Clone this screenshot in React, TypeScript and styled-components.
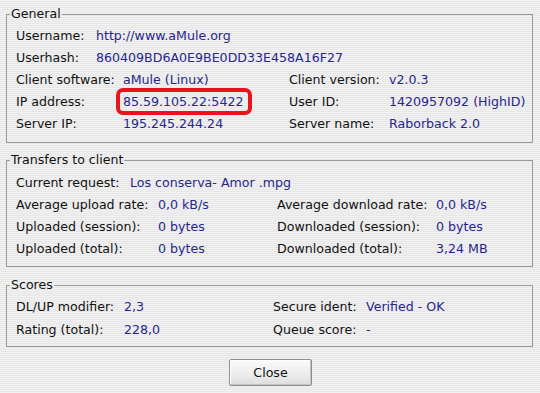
import styled, { createGlobalStyle } from "styled-components";

const GlobalStyle = createGlobalStyle`
  html, body {
    margin: 0;
    padding: 0;
  }
  body {
    width: 540px;
    height: 393px;
    overflow: hidden;
    font-family: "DejaVu Sans", "Liberation Sans", sans-serif;
    font-size: 12.6px;
    color: #111;
    background: repeating-linear-gradient(
      to bottom,
      #f1f1f1 0px,
      #f1f1f1 1px,
      #e7e7e7 1px,
      #e7e7e7 2px
    );
  }
`;

type Row = { label: string; value: string; highlight?: boolean };

const general: Row[][] = [
  [{ label: "Username:", value: "http://www.aMule.org" }],
  [{ label: "Userhash:", value: "860409BD6A0E9BE0DD33E458A16F27" }],
  [
    { label: "Client software:", value: "aMule (Linux)" },
    { label: "Client version:", value: "v2.0.3" },
  ],
  [
    { label: "IP address:", value: "85.59.105.22:5422", highlight: true },
    { label: "User ID:", value: "1420957092 (HighID)" },
  ],
  [
    { label: "Server IP:", value: "195.245.244.24" },
    { label: "Server name:", value: "Raborback 2.0" },
  ],
];

const transfers: Row[][] = [
  [
    { label: "Average upload rate:", value: "0,0 kB/s" },
    { label: "Average download rate:", value: "0,0 kB/s" },
  ],
  [
    { label: "Uploaded (session):", value: "0 bytes" },
    { label: "Downloaded (session):", value: "0 bytes" },
  ],
  [
    { label: "Uploaded (total):", value: "0 bytes" },
    { label: "Downloaded (total):", value: "3,24 MB" },
  ],
];

const scores: Row[][] = [
  [
    { label: "DL/UP modifier:", value: "2,3" },
    { label: "Secure ident:", value: "Verified - OK" },
  ],
  [
    { label: "Rating (total):", value: "228,0" },
    { label: "Queue score:", value: "-" },
  ],
];

const renderRows = (rows: Row[][]) =>
  rows.map((row) =>
    row.map((cell) => [
      <Label key={cell.label}>{cell.label}</Label>,
      <Cell key={cell.label + "v"}>
        <Value $highlight={cell.highlight}>{cell.value}</Value>
      </Cell>,
    ])
  );

const App = () => {
  return (
    <>
      <GlobalStyle />
      <Dialog>
        <Frame $top={6} $pt={2} $pb={8}>
          <Title>General</Title>
          <Grid $cols="80px 1fr" $row={22}>
            {renderRows(general.slice(0, 2))}
          </Grid>
          <Grid $cols="107px 166px 100px 1fr" $row={22}>
            {renderRows(general.slice(2))}
          </Grid>
        </Frame>

        <Frame $top={9} $pt={3} $pb={7}>
          <Title>Transfers to client</Title>
          <Grid $cols="114px 1fr" $row={22}>
            <Label>Current request:</Label>
            <Cell>
              <Value>Los conserva- Amor .mpg</Value>
            </Cell>
          </Grid>
          <Grid $cols="142px 119px 159px 1fr" $row={22}>
            {renderRows(transfers)}
          </Grid>
        </Frame>

        <Frame $top={10} $pt={2} $pb={5}>
          <Title>Scores</Title>
          <Grid $cols="108px 149px 93px 1fr" $row={23}>
            {renderRows(scores)}
          </Grid>
        </Frame>

        <Footer>
          <Button>Close</Button>
        </Footer>
      </Dialog>
    </>
  );
};

export default App;

const Dialog = styled.div`
  display: flex;
  flex-direction: column;
  padding: 0 7px 0 6px;
`;

const Frame = styled.fieldset<{ $top: number; $pt: number; $pb: number }>`
  margin: ${({ $top }) => $top}px 0 0 0;
  padding: ${({ $pt }) => $pt}px 8px ${({ $pb }) => $pb}px 9px;
  border: 1px solid #9a9a9a;
  min-width: 0;
`;

const Title = styled.legend`
  margin-left: -6px;
  padding: 0 1px;
  line-height: 16px;
  font-size: 12.6px;
  color: #111;
`;

const Grid = styled.div<{ $cols: string; $row: number }>`
  display: grid;
  grid-template-columns: ${({ $cols }) => $cols};
  grid-auto-rows: ${({ $row }) => $row}px;
  align-items: center;
`;

const Label = styled.div`
  white-space: nowrap;
  color: #111;
`;

const Cell = styled.div`
  white-space: nowrap;
`;

const Value = styled.span<{ $highlight?: boolean }>`
  position: relative;
  color: #26268e;

  &::after {
    content: "";
    display: ${({ $highlight }) => ($highlight ? "block" : "none")};
    position: absolute;
    left: -7px;
    right: -9px;
    top: -6px;
    bottom: -6px;
    border: 4px solid #e8141b;
    border-radius: 7px;
  }
`;

const Footer = styled.div`
  display: flex;
  justify-content: center;
  margin-top: 12px;
  padding-left: 2px;
`;

const Button = styled.button`
  width: 83px;
  height: 27px;
  font-family: "DejaVu Sans", "Liberation Sans", sans-serif;
  font-size: 12.6px;
  color: #111;
  border: 1px solid #8e8e8e;
  border-radius: 2px;
  background: linear-gradient(to bottom, #fbfbfb 0%, #ececec 60%, #dcdcdc 100%);
  box-shadow: inset -1px -1px 0 #c4c4c4, inset 1px 1px 0 #ffffff;
  padding: 0;
`;
